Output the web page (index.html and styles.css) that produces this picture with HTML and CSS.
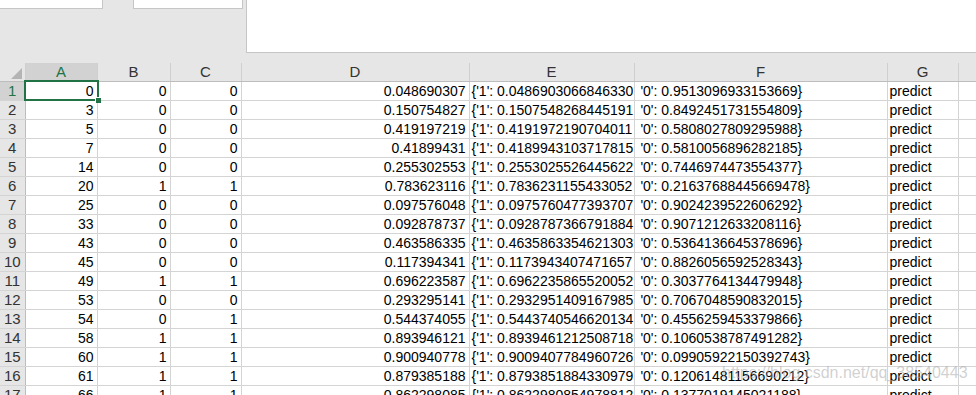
FILE: index.html
```html
<!DOCTYPE html>
<html lang="en">

<head>
  <meta charset="UTF-8" />
  <title>predict.csv - Excel</title>
  <link rel="stylesheet" href="styles.css">
</head>

<body>
  <div class="ribbon">
    <div class="box box-name"></div>
    <div class="box box-func"></div>
    <div class="panel"></div>
  </div>

  <table class="sheet">
    <colgroup>
      <col class="c-row">
      <col class="c-a">
      <col class="c-b">
      <col class="c-c">
      <col class="c-d">
      <col class="c-e">
      <col class="c-f">
      <col class="c-g">
      <col class="c-h">
    </colgroup>
    <thead>
      <tr>
        <th class="corner"><span class="tri"></span></th>
        <th class="on">A</th>
        <th>B</th>
        <th>C</th>
        <th>D</th>
        <th>E</th>
        <th>F</th>
        <th>G</th>
        <th></th>
      </tr>
    </thead>
    <tbody>
      <tr>
        <th class="on">1</th>
        <td class="num sel">0<span class="sel-box"><span class="handle"></span></span></td>
        <td class="num">0</td>
        <td class="num">0</td>
        <td class="num">0.048690307</td>
        <td>{'1': 0.0486903066846330</td>
        <td> '0': 0.9513096933153669}</td>
        <td>predict</td>
        <td></td>
      </tr>
      <tr>
        <th>2</th>
        <td class="num">3</td>
        <td class="num">0</td>
        <td class="num">0</td>
        <td class="num">0.150754827</td>
        <td>{'1': 0.1507548268445191</td>
        <td> '0': 0.8492451731554809}</td>
        <td>predict</td>
        <td></td>
      </tr>
      <tr>
        <th>3</th>
        <td class="num">5</td>
        <td class="num">0</td>
        <td class="num">0</td>
        <td class="num">0.419197219</td>
        <td>{'1': 0.4191972190704011</td>
        <td> '0': 0.5808027809295988}</td>
        <td>predict</td>
        <td></td>
      </tr>
      <tr>
        <th>4</th>
        <td class="num">7</td>
        <td class="num">0</td>
        <td class="num">0</td>
        <td class="num">0.41899431</td>
        <td>{'1': 0.4189943103717815</td>
        <td> '0': 0.5810056896282185}</td>
        <td>predict</td>
        <td></td>
      </tr>
      <tr>
        <th>5</th>
        <td class="num">14</td>
        <td class="num">0</td>
        <td class="num">0</td>
        <td class="num">0.255302553</td>
        <td>{'1': 0.2553025526445622</td>
        <td> '0': 0.7446974473554377}</td>
        <td>predict</td>
        <td></td>
      </tr>
      <tr>
        <th>6</th>
        <td class="num">20</td>
        <td class="num">1</td>
        <td class="num">1</td>
        <td class="num">0.783623116</td>
        <td>{'1': 0.7836231155433052</td>
        <td> '0': 0.21637688445669478}</td>
        <td>predict</td>
        <td></td>
      </tr>
      <tr>
        <th>7</th>
        <td class="num">25</td>
        <td class="num">0</td>
        <td class="num">0</td>
        <td class="num">0.097576048</td>
        <td>{'1': 0.0975760477393707</td>
        <td> '0': 0.9024239522606292}</td>
        <td>predict</td>
        <td></td>
      </tr>
      <tr>
        <th>8</th>
        <td class="num">33</td>
        <td class="num">0</td>
        <td class="num">0</td>
        <td class="num">0.092878737</td>
        <td>{'1': 0.0928787366791884</td>
        <td> '0': 0.9071212633208116}</td>
        <td>predict</td>
        <td></td>
      </tr>
      <tr>
        <th>9</th>
        <td class="num">43</td>
        <td class="num">0</td>
        <td class="num">0</td>
        <td class="num">0.463586335</td>
        <td>{'1': 0.4635863354621303</td>
        <td> '0': 0.5364136645378696}</td>
        <td>predict</td>
        <td></td>
      </tr>
      <tr>
        <th>10</th>
        <td class="num">45</td>
        <td class="num">0</td>
        <td class="num">0</td>
        <td class="num">0.117394341</td>
        <td>{'1': 0.1173943407471657</td>
        <td> '0': 0.8826056592528343}</td>
        <td>predict</td>
        <td></td>
      </tr>
      <tr>
        <th>11</th>
        <td class="num">49</td>
        <td class="num">1</td>
        <td class="num">1</td>
        <td class="num">0.696223587</td>
        <td>{'1': 0.6962235865520052</td>
        <td> '0': 0.3037764134479948}</td>
        <td>predict</td>
        <td></td>
      </tr>
      <tr>
        <th>12</th>
        <td class="num">53</td>
        <td class="num">0</td>
        <td class="num">0</td>
        <td class="num">0.293295141</td>
        <td>{'1': 0.2932951409167985</td>
        <td> '0': 0.7067048590832015}</td>
        <td>predict</td>
        <td></td>
      </tr>
      <tr>
        <th>13</th>
        <td class="num">54</td>
        <td class="num">0</td>
        <td class="num">1</td>
        <td class="num">0.544374055</td>
        <td>{'1': 0.5443740546620134</td>
        <td> '0': 0.4556259453379866}</td>
        <td>predict</td>
        <td></td>
      </tr>
      <tr>
        <th>14</th>
        <td class="num">58</td>
        <td class="num">1</td>
        <td class="num">1</td>
        <td class="num">0.893946121</td>
        <td>{'1': 0.8939461212508718</td>
        <td> '0': 0.1060538787491282}</td>
        <td>predict</td>
        <td></td>
      </tr>
      <tr>
        <th>15</th>
        <td class="num">60</td>
        <td class="num">1</td>
        <td class="num">1</td>
        <td class="num">0.900940778</td>
        <td>{'1': 0.9009407784960726</td>
        <td> '0': 0.09905922150392743}</td>
        <td>predict</td>
        <td></td>
      </tr>
      <tr>
        <th>16</th>
        <td class="num">61</td>
        <td class="num">1</td>
        <td class="num">1</td>
        <td class="num">0.879385188</td>
        <td>{'1': 0.8793851884330979</td>
        <td> '0': 0.12061481156690212}</td>
        <td>predict</td>
        <td></td>
      </tr>
      <tr>
        <th>17</th>
        <td class="num">66</td>
        <td class="num">1</td>
        <td class="num">1</td>
        <td class="num">0.862298085</td>
        <td>{'1': 0.8622980854978812</td>
        <td> '0': 0.1377019145021188}</td>
        <td>predict</td>
        <td></td>
      </tr>
    </tbody>
  </table>

  <div class="watermark">https://blog.csdn.net/qq_38540443</div>
</body>

</html>
```

FILE: styles.css
```css
body {
  margin: 0;
  background: #e6e6e6;
  font-family: "Liberation Sans", Arial, sans-serif;
  color: #000;
  position: relative;
  height: 395px;
  overflow: hidden;
}

/* ===== top strip (name box / formula bar) ===== */

.ribbon {
  display: flex;
  align-items: flex-start;
  height: 63px;
}

.box {
  background: #fff;
  border: 1px solid #c6c6c6;
  border-top: none;
  height: 8px;
}

.box-name {
  width: 102px;
  border-left: none;
}

.box-func {
  width: 108px;
  margin-left: 30px;
}

.panel {
  flex: 1;
  height: 52px;
  margin-left: 3px;
  background: #fff;
  border-left: 1px solid #c6c6c6;
  border-bottom: 1px solid #c6c6c6;
}

/* ===== grid ===== */

.sheet {
  border-collapse: collapse;
  table-layout: fixed;
  width: 1018px;
  font-size: 14px;
}

.c-row { width: 25px; }
.c-a { width: 72px; }
.c-b { width: 73px; }
.c-c { width: 71px; }
.c-d { width: 228px; }
.c-e { width: 165px; }
.c-f { width: 253px; }
.c-g { width: 71px; }
.c-h { width: 60px; }

.sheet th,
.sheet td {
  padding: 0 2px;
  white-space: pre;
  overflow: hidden;
  text-overflow: clip;
  line-height: 18px;
  height: 18px;
}

.sheet thead th {
  background: #e6e6e6;
  font-weight: normal;
  font-size: 15px;
  color: #333;
  border-right: 1px solid #cfcfcf;
  border-bottom: 1px solid #bdbdbd;
  text-align: center;
}

.sheet tbody th {
  background: #e6e6e6;
  font-weight: normal;
  font-size: 15px;
  color: #333;
  text-align: center;
  padding: 0;
  border-right: 1px solid #bdbdbd;
  border-bottom: 1px solid #d4d4d4;
}

.sheet th.on {
  background: #d2d2d2;
  color: #217346;
}

.sheet td {
  background: #fff;
  border-right: 1px solid #d4d4d4;
  border-bottom: 1px solid #d4d4d4;
  text-align: left;
}

.sheet td.num {
  text-align: right;
  padding-right: 3px;
}

.corner {
  position: relative;
}

.tri {
  position: absolute;
  right: 3px;
  bottom: 2px;
  width: 0;
  height: 0;
  border-left: 11px solid transparent;
  border-bottom: 11px solid #b4b4b4;
}

/* active cell */

.sel {
  position: relative;
  overflow: visible !important;
}

.sel-box {
  position: absolute;
  left: -2px;
  top: -2px;
  right: -2px;
  bottom: -1px;
  border: 2px solid #217346;
}

.handle {
  position: absolute;
  right: -4px;
  bottom: -4px;
  width: 5px;
  height: 5px;
  background: #217346;
  border: 1px solid #fff;
  border-right: none;
  border-bottom: none;
}

.watermark {
  position: absolute;
  left: 722px;
  top: 364px;
  font-size: 16px;
  color: rgba(170, 170, 170, 0.55);
  white-space: nowrap;
}
```
